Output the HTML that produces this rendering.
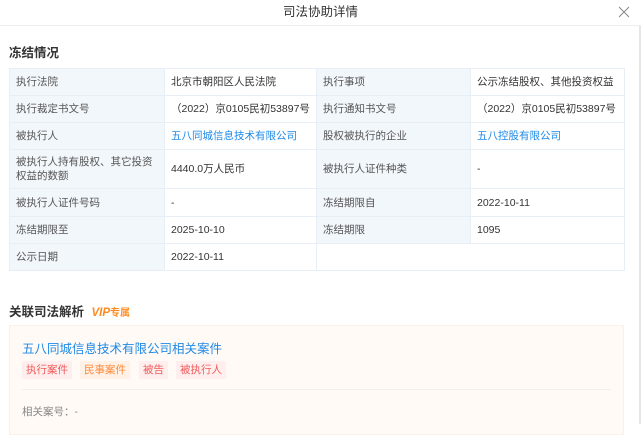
<!DOCTYPE html><html><head><meta charset="utf-8"><style>
*{margin:0;padding:0;box-sizing:border-box}
body{width:641px;height:424px;overflow:hidden;background:#fff;font-family:"Liberation Sans","Noto Sans CJK SC",sans-serif;color:#333;font-size:10.5px;position:relative}
.hdr{height:26px;border-bottom:1px solid #eee;text-align:center;line-height:25px;font-size:12.5px;color:#333}
.x{position:absolute;right:10px;top:5px;width:14px;height:14px}
h3{position:absolute;left:9px;font-size:12.5px;font-weight:bold;color:#333;white-space:nowrap}
table{position:absolute;left:9px;top:68px;width:615px;border-collapse:collapse;table-layout:fixed}
td{border:1px solid #e8eef5;padding:0 6px;height:27px;line-height:14px;vertical-align:middle;color:#333;white-space:nowrap;overflow:hidden}
td.l{background:#f2f7fc;color:#555}
td.w{white-space:normal}
a{color:#1f8ae6;text-decoration:none}
.box{position:absolute;left:9px;top:325px;width:615px;height:110px;background:#fffaf6;border:1px solid #fbf1e8}
.t{position:absolute;left:12px;top:12px;font-size:12.5px;color:#1f8ae6}
.tag{position:absolute;top:35px;height:18px;line-height:18px;padding:0 4px;font-size:10.5px}
.sb{position:absolute;right:0;top:26px;width:2px;height:398px;background:#e6e6e6}
</style></head><body>
<div class="hdr">司法协助详情</div>
<svg class="x" viewBox="0 0 14 14"><path d="M2 2L12 12M12 2L2 12" stroke="#888" stroke-width="1"/></svg>
<h3 style="top:42px">冻结情况</h3>
<table>
<colgroup><col style="width:155px"><col style="width:152px"><col style="width:154px"><col style="width:154px"></colgroup>
<tr><td class="l">执行法院</td><td>北京市朝阳区人民法院</td><td class="l">执行事项</td><td>公示冻结股权、其他投资权益</td></tr>
<tr><td class="l">执行裁定书文号</td><td>（2022）京0105民初53897号</td><td class="l">执行通知书文号</td><td>（2022）京0105民初53897号</td></tr>
<tr><td class="l">被执行人</td><td><a>五八同城信息技术有限公司</a></td><td class="l">股权被执行的企业</td><td><a>五八控股有限公司</a></td></tr>
<tr><td class="l w" style="height:39px">被执行人持有股权、其它投资权益的数额</td><td>4440.0万人民币</td><td class="l">被执行人证件种类</td><td>-</td></tr>
<tr><td class="l" style="height:28px">被执行人证件号码</td><td>-</td><td class="l">冻结期限自</td><td>2022-10-11</td></tr>
<tr><td class="l">冻结期限至</td><td>2025-10-10</td><td class="l">冻结期限</td><td>1095</td></tr>
<tr><td class="l">公示日期</td><td>2022-10-11</td><td colspan="2"></td></tr>
</table>
<h3 style="top:301px">关联司法解析 <span style="color:#ff8a1f;font-style:italic;font-size:11.5px;margin-left:4px">VIP</span><span style="color:#ff8a1f;font-size:10px">专属</span></h3>
<div class="box">
<div class="t">五八同城信息技术有限公司相关案件</div>
<div class="tag" style="left:12px;background:#ffeeee;color:#f05a5a">执行案件</div>
<div class="tag" style="left:70px;background:#fff1e6;color:#ff8a3d">民事案件</div>
<div class="tag" style="left:129px;background:#ffeeee;color:#f05a5a">被告</div>
<div class="tag" style="left:166px;background:#ffeeee;color:#f05a5a">被执行人</div>
<div style="position:absolute;left:12px;right:12px;top:63px;border-top:1px solid #f5ede6"></div>
<div style="position:absolute;left:12px;top:78px;color:#888">相关案号：-</div>
</div>
<div class="sb"></div>
</body></html>
